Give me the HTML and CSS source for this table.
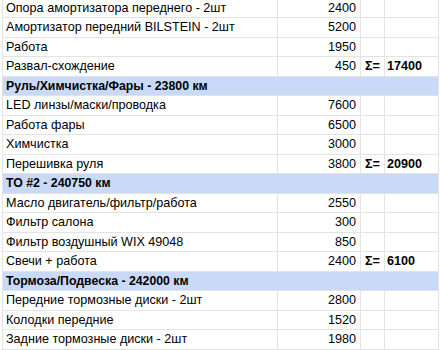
FILE: index.html
```html
<!DOCTYPE html>
<html lang="ru">
<head>
<meta charset="utf-8">
<link rel="stylesheet" href="styles.css">
</head>
<body>
<div class="sheet">
  <div class="row"><div class="c a">Опора амортизатора переднего - 2шт</div><div class="c b">2400</div><div class="c s"></div><div class="c d"></div></div>
  <div class="row"><div class="c a">Амортизатор передний BILSTEIN - 2шт</div><div class="c b">5200</div><div class="c s"></div><div class="c d"></div></div>
  <div class="row"><div class="c a">Работа</div><div class="c b">1950</div><div class="c s"></div><div class="c d"></div></div>
  <div class="row"><div class="c a">Развал-схождение</div><div class="c b">450</div><div class="c s">Σ=</div><div class="c d">17400</div></div>
  <div class="row head"><div class="c h">Руль/Химчистка/Фары - 23800 км</div></div>
  <div class="row"><div class="c a">LED линзы/маски/проводка</div><div class="c b">7600</div><div class="c s"></div><div class="c d"></div></div>
  <div class="row"><div class="c a">Работа фары</div><div class="c b">6500</div><div class="c s"></div><div class="c d"></div></div>
  <div class="row"><div class="c a">Химчистка</div><div class="c b">3000</div><div class="c s"></div><div class="c d"></div></div>
  <div class="row"><div class="c a">Перешивка руля</div><div class="c b">3800</div><div class="c s">Σ=</div><div class="c d">20900</div></div>
  <div class="row head"><div class="c h">ТО #2 - 240750 км</div></div>
  <div class="row"><div class="c a">Масло двигатель/фильтр/работа</div><div class="c b">2550</div><div class="c s"></div><div class="c d"></div></div>
  <div class="row"><div class="c a">Фильтр салона</div><div class="c b">300</div><div class="c s"></div><div class="c d"></div></div>
  <div class="row"><div class="c a">Фильтр воздушный WIX 49048</div><div class="c b">850</div><div class="c s"></div><div class="c d"></div></div>
  <div class="row"><div class="c a">Свечи + работа</div><div class="c b">2400</div><div class="c s">Σ=</div><div class="c d">6100</div></div>
  <div class="row head"><div class="c h">Тормоза/Подвеска - 242000 км</div></div>
  <div class="row"><div class="c a">Передние тормозные диски - 2шт</div><div class="c b">2800</div><div class="c s"></div><div class="c d"></div></div>
  <div class="row"><div class="c a">Колодки передние</div><div class="c b">1520</div><div class="c s"></div><div class="c d"></div></div>
  <div class="row"><div class="c a">Задние тормозные диски - 2шт</div><div class="c b">1980</div><div class="c s"></div><div class="c d"></div></div>
</div>
</body>
</html>
```
FILE: styles.css
```css
html, body {
  margin: 0;
  padding: 0;
  background: #ffffff;
  overflow: hidden;
}
.sheet {
  margin-top: -1.2px;
  margin-left: 2px;
  width: 436px;
  border-left: 1px solid #e2e3e3;
  font-family: "Liberation Sans", Arial, sans-serif;
  font-size: 12.6px;
  color: #000000;
}
.row {
  display: grid;
  grid-template-columns: 275px 83px 24px 54px;
  height: 19.5px;
  box-sizing: border-box;
  border-bottom: 1px solid #e2e3e3;
}
.c {
  box-sizing: border-box;
  border-right: 1px solid #e2e3e3;
  line-height: 18.5px;
  padding: 0 3px;
  white-space: nowrap;
  overflow: hidden;
}
.b {
  text-align: right;
  padding-right: 4px;
}
.s {
  font-weight: bold;
  padding: 0 0 0 4px;
  overflow: visible;
}
.d {
  font-weight: bold;
  padding-left: 2px;
}
.head {
  display: flex;
  background: #c9daf8;
}
.h {
  flex: 1;
  font-weight: bold;
  font-size: 12.3px;
}
```
